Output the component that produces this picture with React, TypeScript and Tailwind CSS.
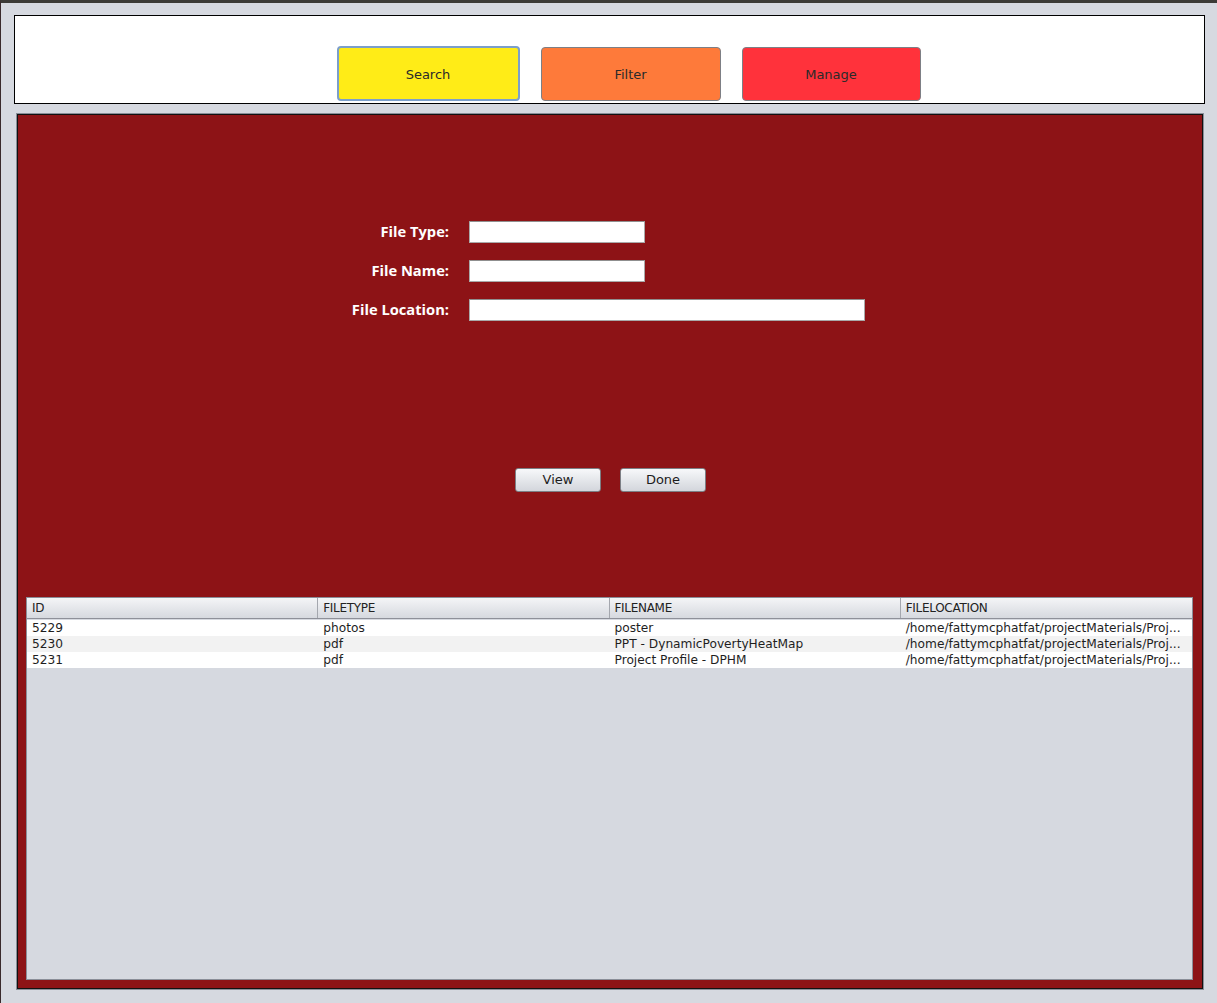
import React from "react";

// Swing-style file search window: tab buttons, search form, results table
const rows = [
  { id: "5229", type: "photos", name: "poster", loc: "/home/fattymcphatfat/projectMaterials/Proj..." },
  { id: "5230", type: "pdf", name: "PPT - DynamicPovertyHeatMap", loc: "/home/fattymcphatfat/projectMaterials/Proj..." },
  { id: "5231", type: "pdf", name: "Project Profile - DPHM", loc: "/home/fattymcphatfat/projectMaterials/Proj..." },
];

const columns = ["ID", "FILETYPE", "FILENAME", "FILELOCATION"];

function Field({ label, wide }: { label: string; wide?: boolean }) {
  return (
    <div className="flex items-center">
      <div className="w-[451px] pr-[20px] pb-[2px] text-right text-[14.7px] font-bold text-white font-['Open_Sans',sans-serif] leading-none">
        {label}
      </div>
      <div
        className={
          (wide ? "w-[396px]" : "w-[176px]") +
          " h-[22px] bg-white border border-[#a9a9a9] border-t-[#8f8f8f]"
        }
      />
    </div>
  );
}

function SmallButton({ label }: { label: string }) {
  return (
    <button className="w-[86px] h-[24px] rounded-[3px] border border-[#7d7f85] bg-gradient-to-b from-[#f7f8fa] to-[#d3d6dc] text-[13px] text-[#1c1c1c] font-['DejaVu_Sans',sans-serif]">
      {label}
    </button>
  );
}

export default function App() {
  return (
    <div className="w-[1217px] h-[1003px] bg-[#d6d9e0] border-t-[3px] border-[#3c3b37] border-l border-l-[#3a2a2c] font-['DejaVu_Sans',sans-serif] overflow-hidden">
      {/* Tab strip */}
      <div className="mt-[12px] ml-[13px] w-[1191px] h-[89px] bg-white border border-black flex justify-center items-start gap-[21px] pt-[31px] pl-[38px]">
        <button className="w-[183px] h-[55px] -mt-[1px] pt-[2px] rounded-[4px] border-2 border-[#7c9fca] bg-[#ffec17] text-[13px] text-[#2a2a2a]">
          Search
        </button>
        <button className="w-[180px] h-[54px] pt-[2px] rounded-[4px] border border-[#7d7f85] bg-[#fe7a3a] text-[13px] text-[#2a2a2a]">
          Filter
        </button>
        <button className="w-[179px] h-[54px] pt-[2px] rounded-[4px] border border-[#7d7f85] bg-[#ff323b] text-[13px] text-[#2a2a2a]">
          Manage
        </button>
      </div>

      {/* Main red panel */}
      <div className="mt-[9px] ml-[15px] w-[1188px] h-[877px] border border-[#8a8e98]">
        <div className="w-full h-full border border-[#111] bg-[#8d1316] flex flex-col">
          <div className="pt-[106px] flex flex-col gap-[17px]">
            <Field label="File Type:" />
            <Field label="File Name:" />
            <Field label="File Location:" wide />
          </div>

          <div className="mt-[147px] flex justify-center gap-[19px] pl-[1px]">
            <SmallButton label="View" />
            <SmallButton label="Done" />
          </div>

          {/* Results table */}
          <div className="mt-[105px] ml-[8px] mr-[9px] mb-[8px] flex-1 border border-[#8a8e98] bg-[#d6d9e0] flex flex-col">
            <div className="grid grid-cols-4 h-[21px] bg-gradient-to-b from-[#f4f5f7] to-[#d6d9df] border-b border-[#8e9099]">
              {columns.map((c, i) => (
                <div
                  key={c}
                  className={
                    "px-[5px] flex items-center text-[12px] tracking-[-0.3px] text-[#222] " +
                    (i < 3 ? "border-r border-[#a4a7ae]" : "")
                  }
                >
                  {c}
                </div>
              ))}
            </div>
            <div className="mt-[1px]">
              {rows.map((r, i) => (
                <div
                  key={r.id}
                  className={
                    "grid grid-cols-4 h-[16px] text-[12.2px] leading-[16px] text-[#1e1e1e] " +
                    (i % 2 === 1 ? "bg-[#f2f2f2]" : "bg-white")
                  }
                >
                  <div className="px-[5px] truncate">{r.id}</div>
                  <div className="px-[5px] truncate">{r.type}</div>
                  <div className="px-[5px] truncate">{r.name}</div>
                  <div className="px-[5px] whitespace-nowrap overflow-hidden">{r.loc}</div>
                </div>
              ))}
            </div>
          </div>
        </div>
      </div>
    </div>
  );
}
